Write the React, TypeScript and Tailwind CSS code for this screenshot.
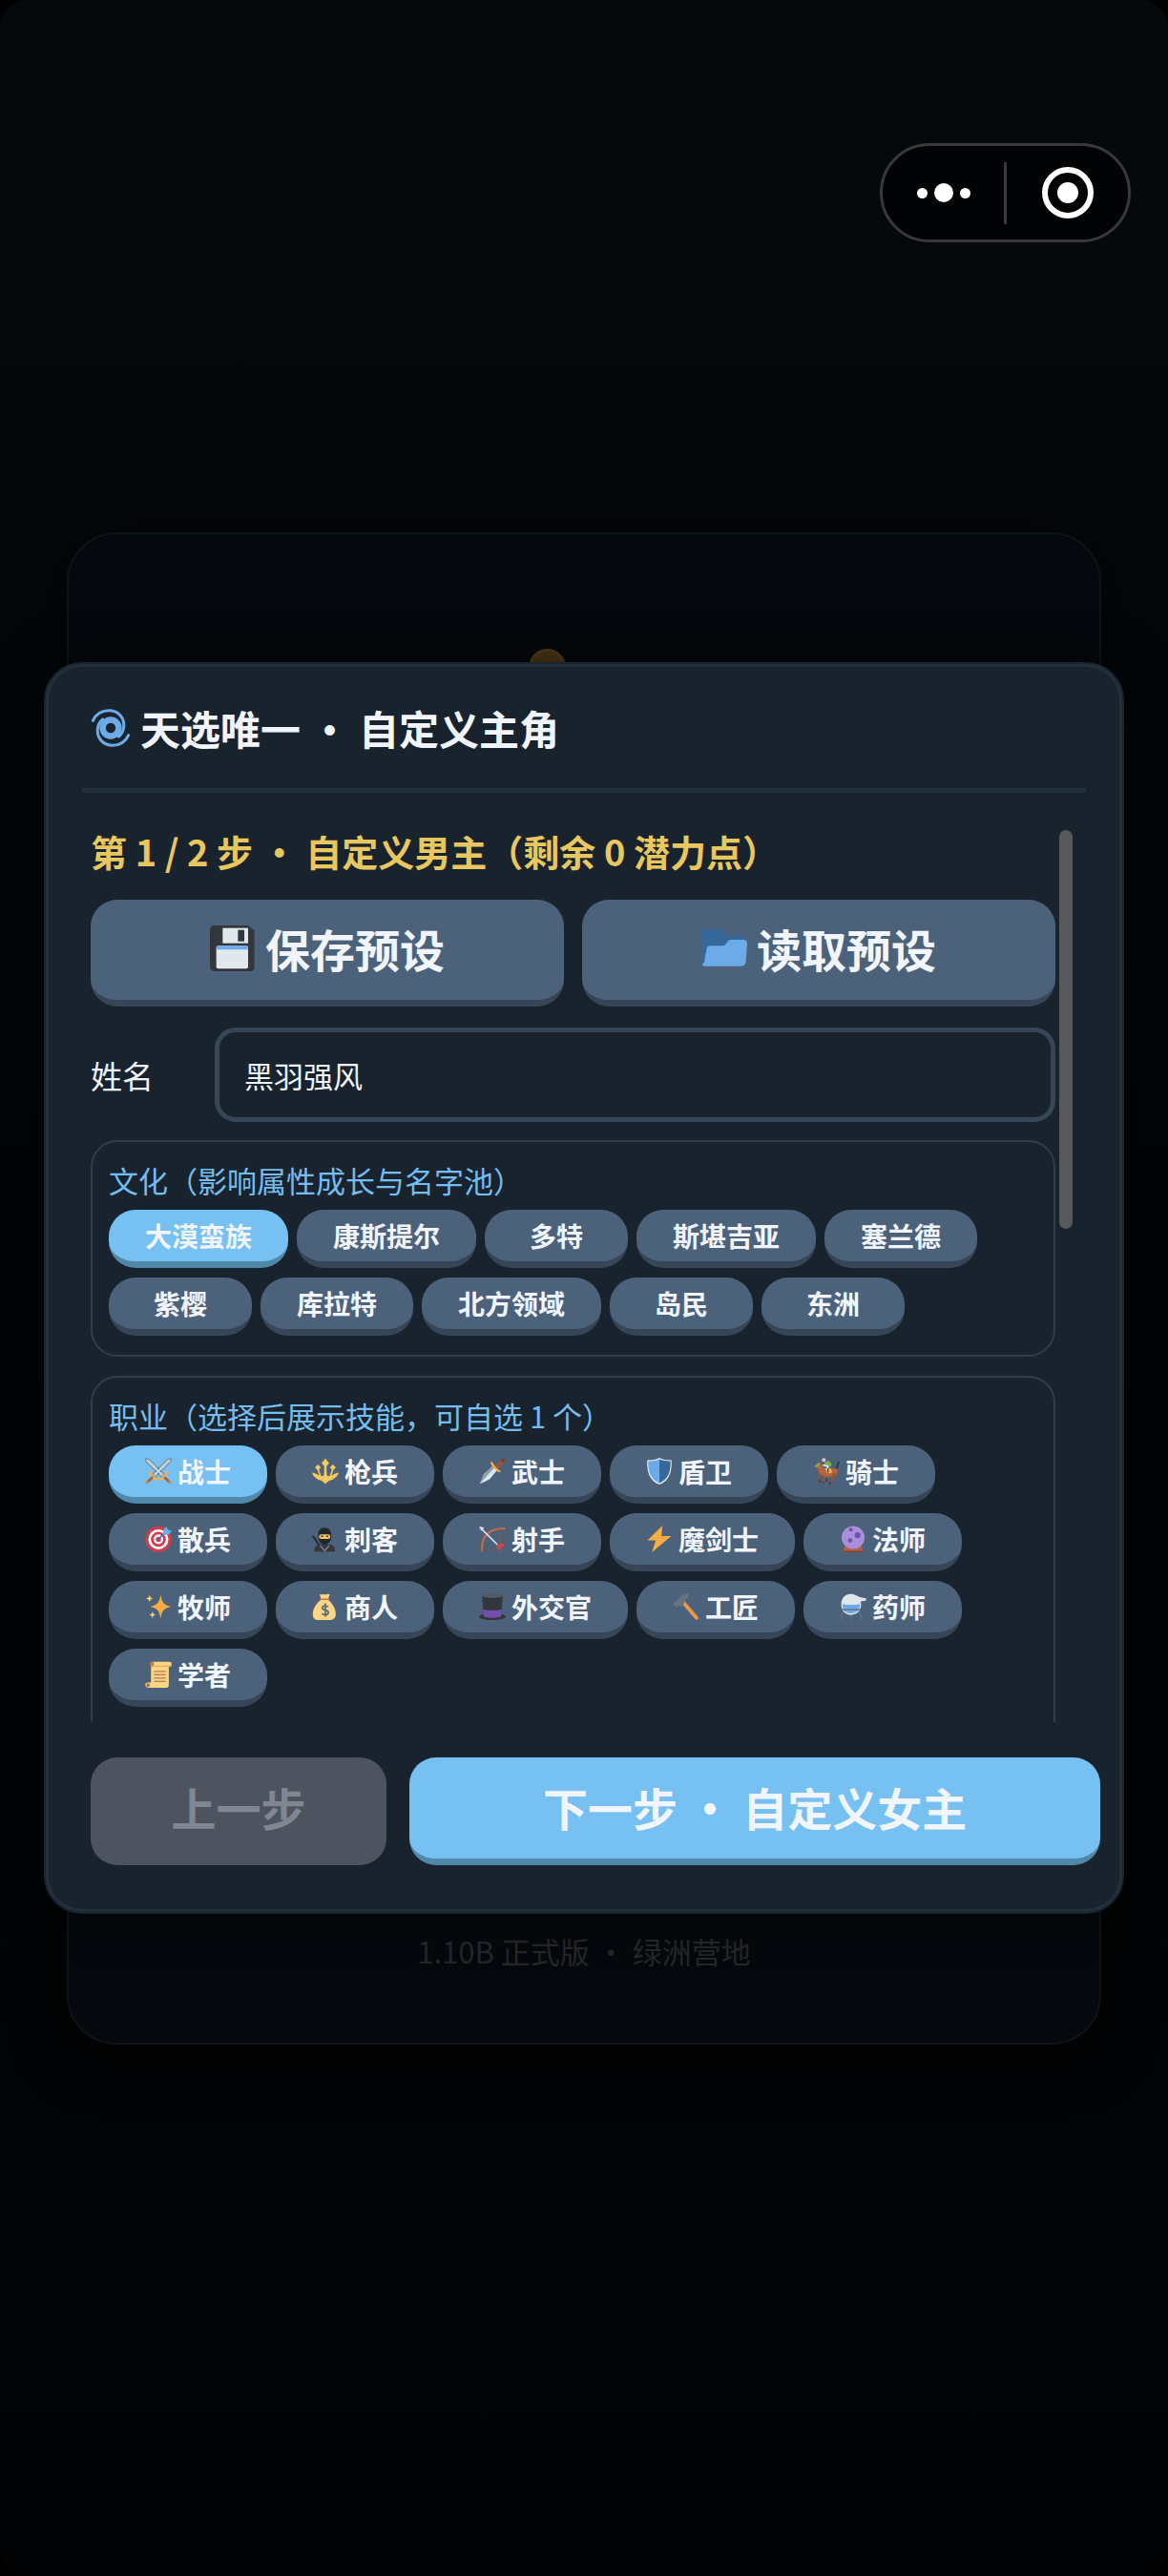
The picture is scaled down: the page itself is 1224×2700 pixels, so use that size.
import { useState, type ReactNode } from "react";

const icons: Record<string, ReactNode> = {
  cyclone: (
    <g fill="none" stroke="#6cabe8" strokeLinecap="round">
      <circle cx="18" cy="18" r="7.2" strokeWidth="5.600" />
      <path d="M2 11.500C5 5 10.500 2.400 16.500 2.400c8 0 13.500 6 13.300 13.400-.1 4.500-1.800 7.800-4.600 10" strokeWidth="2.600" />
      <path d="M34 24.500c-3 6.500-8.500 9.100-14.500 9.100-8 0-13.500-6-13.300-13.400.1-4.500 1.800-7.800 4.600-10" strokeWidth="2.600" />
    </g>
  ),
  floppy: (
    <g>
      <path d="M3 0h27l5 4v28c0 2-1 4-3 4H4c-2 0-4-1-4-4V4c0-2 1-4 3-4z" fill="#31373d" />
      <path d="M10 2h20v12H10z" fill="#e1e8ec" />
      <path d="M22 3.500h5v9h-5z" fill="#31373d" />
      <rect x="5" y="16" width="25" height="18" rx="1.500" fill="#e1e8ec" />
      <path d="M6.500 16h22c1 0 1.500 1 1.500 3H5c0-2 .5-3 1.500-3z" fill="#6cabe8" />
    </g>
  ),
  folder: (
    <g>
      <path d="M0 30V6c0-2 1-3 3-3h10c1.500 0 2.500 1 3.500 2.500S18 8 20 8h11c3 0 4 2 4 5L26 30z" fill="#36689c" />
      <path d="M.5 30c2 0 2-2 2.200-4L4 19c.3-2 1-3 3-3h10c2 0 2-1.500 3.500-3.200 1-1 2-1.500 3.500-1.500h9c2 0 3 1 3 3L35 28c0 3-1.500 4-4 4H3c-1.500 0-2.500-1-2.500-2z" fill="#6cabe8" />
    </g>
  ),
  swords: (
    <g strokeLinecap="round">
      <path d="M1 1l5 1 20 20-4 4L2 6zM35 1l-5 1-20 20 4 4L34 6z" fill="#a9b8c4" stroke="#5f7383" strokeWidth="1" />
      <path d="M3 3l20 20M33 3L13 23" stroke="#d9e3ea" strokeWidth="1.500" />
      <path d="M7 19c0 4 1 5 3.500 6.500C12 28 14 29 17 29M29 19c0 4-1 5-3.500 6.500C24 28 22 29 19 29" stroke="#f2b04f" strokeWidth="3" fill="none" />
      <path d="M9 27l-5 5M27 27l5 5" stroke="#a9603f" strokeWidth="3.500" />
      <circle cx="2.800" cy="33.200" r="2.300" fill="#d08a45" />
      <circle cx="33.200" cy="33.200" r="2.300" fill="#d08a45" />
    </g>
  ),
  trident: (
    <g fill="#f5c95c">
      <path d="M18 1l5 6-3.500 4.500L20 25h-4l.5-13.500L13 7z" />
      <path d="M8 9l4 4-2.700 3.200L12.500 25l-2 1-3-9L4 13zM28 9l-4 4 2.700 3.200L23.500 25l2 1 3-9L32 13z" />
      <path d="M0 20c4 0 8 4 12 4.500 3 .3 4-1.500 6-1.500s3 1.800 6 1.500c4-.5 8-4.500 12-4.500-2 6-7 9.500-13 11l-5 4-5-4C7 29.500 2 26 0 20z" />
    </g>
  ),
  dagger: (
    <g strokeLinecap="round">
      <path d="M1 35l5-13L18 11l6 6-10 12z" fill="#8fa1af" />
      <path d="M1 35L20 14l4 3-10 12z" fill="#dfe7ec" />
      <path d="M25 12l6-7" stroke="#a0523a" strokeWidth="5" />
      <path d="M17 7c1 3 2.500 4 4.500 6.500 2 2 3.500 3.500 6 4.500" stroke="#f2b04f" strokeWidth="3" fill="none" />
      <circle cx="32.500" cy="3.500" r="2.600" fill="#7b3d2e" />
    </g>
  ),
  shield: (
    <g>
      <path d="M18 0c5 2.500 10 3 15 3 1.500 0 1.500 1 1.500 3 0 15-4 25-16.500 30C5.500 31 1.500 21 1.500 6c0-2 0-3 1.500-3 5 0 10-.5 15-3z" fill="#e1e8ec" />
      <path d="M18 2C13 4 9 4.500 3 4.500 2.500 19 6.500 29 18 34z" fill="#6cabe8" />
      <path d="M18 2c5 2 9 2.500 15 2.500C33.500 19 29.500 29 18 34z" fill="#36689c" />
    </g>
  ),
  horse: (
    <g strokeLinecap="round">
      <path d="M31 14c3 0 1-6 4-8" stroke="#31373d" strokeWidth="2.200" fill="none" />
      <path d="M2 13l5-7 4 1 2 6c6 3 12 2 18 1 3 2 3 6 0 9l-5 3-12-1-6-5-2-8-3 2z" fill="#b8643c" />
      <path d="M10 22l-3 5 2 3M14 24l3 4-3 5M26 24l3 4-5 5M29 21l-4 6" stroke="#9b5132" strokeWidth="2.300" fill="none" />
      <path d="M9 30v2M14 33h-1M18 29v3M23 33v2" stroke="#31373d" strokeWidth="1.800" />
      <path d="M2 12l4-5 3 1-2 5z" fill="#79ad4f" />
      <path d="M16 14h8l2 6-7 1z" fill="#f2b04f" />
      <path d="M15 6l6-2 4 4-1 4-7 1z" fill="#79ad4f" />
      <path d="M14 10l6 1M20 12l-1 6" stroke="#e1e8ec" strokeWidth="2.200" />
      <circle cx="14.500" cy="2.800" r="2.600" fill="#f0b8d8" />
      <path d="M20 15v4" stroke="#31373d" strokeWidth="2" />
    </g>
  ),
  target: (
    <g>
      <circle cx="18" cy="18.500" r="17.500" fill="#d23c4c" />
      <circle cx="18" cy="18.500" r="13.500" fill="#fff" />
      <circle cx="18" cy="18.500" r="10" fill="#d23c4c" />
      <circle cx="18" cy="18.500" r="6.500" fill="#fff" />
      <circle cx="18" cy="18.500" r="3.500" fill="#d23c4c" />
      <path d="M18 18.500L27 9" stroke="#3d77b8" strokeWidth="2" />
      <path d="M24 11l1-6 4-4 1.500 4.500L36 7l-4 5-6 1z" fill="#6cabe8" />
    </g>
  ),
  ninja: (
    <g>
      <path d="M1 14l9 13" stroke="#23282d" strokeWidth="2.500" />
      <path d="M3 35c0-7 3-9 8-9.500h12c5 .5 8 2.500 8 9.500z" fill="#31373d" />
      <path d="M17 3c6 0 9 4 9 10 0 8-4 13-9 13s-9-5-9-13C8 7 11 3 17 3z" fill="#23282d" />
      <rect x="9.500" y="12" width="15" height="6" rx="2.500" fill="#f5c95c" />
      <path d="M12 14.500h3M19 14.500h3" stroke="#4b3b21" strokeWidth="1.800" />
      <path d="M11 27l6 7 6-7" stroke="#7d8791" strokeWidth="1.600" fill="none" />
    </g>
  ),
  bow: (
    <g fill="none" strokeLinecap="round">
      <path d="M4 34C3 15 12 4 34 4" stroke="#bd6a4d" strokeWidth="3" />
      <path d="M5 32h24V5" stroke="#7b5a55" strokeWidth="1" />
      <path d="M4 5l24 24" stroke="#dce4ea" strokeWidth="2" />
      <path d="M0 1l7 2-4 4z" fill="#dce4ea" />
      <path d="M24 25l8-1 3 4-5 1-1 5-4-3z" fill="#d9434f" />
    </g>
  ),
  bolt: <path d="M22 0L2 20h11L8 36 34 14H21z" fill="#f7ad43" />,
  crystal: (
    <g>
      <path d="M7 27h22l3 9H4z" fill="#b55f48" />
      <path d="M5 34h26v2H5z" fill="#8a4231" />
      <circle cx="18" cy="16" r="15.500" fill="#a98fd9" />
      <circle cx="15" cy="5.500" r="2.500" fill="#744eaa" />
      <circle cx="24" cy="13" r="4" fill="#744eaa" />
      <circle cx="14" cy="20" r="3" fill="#744eaa" />
    </g>
  ),
  sparkles: (
    <g>
      <path d="M21 2c2 11 4 13.500 14 16-10 2.500-12 5-14 16-2-11-4-13.500-14-16 10-2.500 12-5 14-16z" fill="#f7ad43" />
      <path d="M6 2c.8 3.500 1.500 4.200 5 5-3.500.8-4.200 1.500-5 5-.8-3.500-1.500-4.200-5-5 3.500-.8 4.200-1.500 5-5zM10 24c.8 3.500 1.500 4.200 5 5-3.500.8-4.200 1.500-5 5-.8-3.500-1.500-4.200-5-5 3.500-.8 4.200-1.500 5-5z" fill="#f9cf72" />
    </g>
  ),
  money: (
    <g>
      <path d="M10 1c3 2 5-1 8 1 3-2 4 0 6-1-1 3-2 5-2 8 5 4 10 12 10 19 0 6-4 8-8 8H8c-4 0-7-2-7-8C1 21 6 13 12 9c0-3-1-5-2-8z" fill="#f9d686" />
      <path d="M11 8h12" stroke="#c8764c" strokeWidth="2" />
      <path d="M21.500 18.500c-1-2-7.500-3-7.500 1 0 4.500 8 2 8 6.500 0 4-7.500 3.500-8.500 1M18 13.500v18" stroke="#5c6b78" strokeWidth="2.300" fill="none" />
    </g>
  ),
  hat: (
    <g>
      <ellipse cx="18" cy="31.500" rx="18" ry="4.500" fill="#31373d" />
      <path d="M4 3h28l-2 28c-3 3-21 3-24 0z" fill="#31373d" />
      <path d="M5.200 21.500c7 2 18 2 25.600 0L30 31c-4 3-20 3-24 0z" fill="#744eaa" />
      <ellipse cx="18" cy="3.500" rx="14" ry="3" fill="#4f5a64" />
    </g>
  ),
  hammer: (
    <g strokeLinecap="round">
      <path d="M14 12l18 21" stroke="#ee9547" strokeWidth="5" />
      <path d="M21 1c-5-1-9 1-12 5L0 14l5 5c2-3 4-3 6-1l5-5c-1-3 0-5 5-7z" fill="#66757f" />
    </g>
  ),
  alembic: (
    <g>
      <path d="M4 24L1 35M26 24l4 11M15 28v7" stroke="#66757f" strokeWidth="1.600" />
      <path d="M15 1c6 0 8 3 12 4l9 2-1 3-7 1c1 3 1 6 0 9-2 6-7 9-13 9-8 0-13-6-13-14C2 7 7 1 15 1z" fill="#dfe7ec" />
      <path d="M4 14c5 2 17 2 23 0 1 7-3 13-12 13S3 21 4 14z" fill="#6cabe8" />
      <path d="M3 22h25" stroke="#66757f" strokeWidth="2" />
    </g>
  ),
  scroll: (
    <g>
      <path d="M9 1h24c4 1 4 6 0 7h-1v24c0 2-1 4-3 4H4c-5-1-5-7 0-7h4V8z" fill="#f9d686" />
      <path d="M9 1c4 0 4 6 0 6s-4-6 0-6z" fill="#b97845" />
      <path d="M9 7h24c3-1 3-3 2-5" stroke="#e5ac5a" strokeWidth="1.500" fill="none" />
      <path d="M12 14h16M12 18.500h16M12 23h16M12 27.500h16" stroke="#c07a4f" strokeWidth="1.800" />
      <circle cx="4" cy="32.500" r="2.500" fill="#b97845" />
    </g>
  ),
};

function Emoji({ name, className }: { name: string; className: string }) {
  return (
    <svg viewBox="0 0 36 36" aria-hidden="true" className={`shrink-0 ${className}`}>
      {icons[name]}
    </svg>
  );
}

const cultures = [
  { label: "大漠蛮族" },
  { label: "康斯提尔" },
  { label: "多特" },
  { label: "斯堪吉亚" },
  { label: "塞兰德" },
  { label: "紫樱" },
  { label: "库拉特" },
  { label: "北方领域" },
  { label: "岛民" },
  { label: "东洲" },
];

const jobs = [
  { label: "战士", icon: "swords" },
  { label: "枪兵", icon: "trident" },
  { label: "武士", icon: "dagger" },
  { label: "盾卫", icon: "shield" },
  { label: "骑士", icon: "horse" },
  { label: "散兵", icon: "target" },
  { label: "刺客", icon: "ninja" },
  { label: "射手", icon: "bow" },
  { label: "魔剑士", icon: "bolt" },
  { label: "法师", icon: "crystal" },
  { label: "牧师", icon: "sparkles" },
  { label: "商人", icon: "money" },
  { label: "外交官", icon: "hat" },
  { label: "工匠", icon: "hammer" },
  { label: "药师", icon: "alembic" },
  { label: "学者", icon: "scroll" },
];

type ChipGroupProps = {
  title: string;
  options: { label: string; icon?: string }[];
  value: string;
  onChange: (label: string) => void;
  className: string;
};

function ChipGroup({ title, options, value, onChange, className }: ChipGroupProps) {
  return (
    <section aria-label={title} className={`rounded-[28px] border-2 border-[#303e4b] px-[17px] pt-[17px] ${className}`}>
      <h3 className="text-[31px] leading-[46px] text-[#74bdee]">{title}</h3>
      <div className="mt-2 flex flex-wrap gap-x-[9px] gap-y-[10px]">
        {options.map((option) => (
          <button
            key={option.label}
            type="button"
            aria-pressed={option.label === value}
            onClick={() => onChange(option.label)}
            className={`flex h-[61px] min-w-[150px] items-center justify-center gap-[6px] rounded-[28px] border-b-[7px] px-[38px] text-[28px] leading-[40px] font-bold text-[#f1f5fd] ${
              option.label === value ? "border-[#5088aa] bg-[#76c1f2]" : "border-[#374558] bg-[#4c627b]"
            }`}
          >
            {option.icon && <Emoji name={option.icon} className="size-7" />}
            {option.label}
          </button>
        ))}
      </div>
    </section>
  );
}

function PresetButton({ icon, label }: { icon: string; label: string }) {
  return (
    <button
      type="button"
      className="flex h-[112px] items-center justify-center gap-[10px] rounded-[28px] border-b-[7px] border-[#374558] bg-[#4c627b] pb-[3px] text-[47px] leading-[64px] font-bold text-[#f1f5fd]"
    >
      <Emoji name={icon} className="size-12" />
      {label}
    </button>
  );
}

function Capsule() {
  return (
    <div className="absolute top-[150px] right-[39px] flex h-[104px] w-[263px] items-center rounded-full border-3 border-[#39393b] bg-[#020304]">
      <button type="button" aria-label="更多" className="flex flex-1 items-center justify-center gap-[7px]">
        <span className="size-[11px] rounded-full bg-white" />
        <span className="size-5 rounded-full bg-white" />
        <span className="size-[11px] rounded-full bg-white" />
      </button>
      <span className="h-[65px] w-[3px] bg-[#39393b]" />
      <button type="button" aria-label="关闭" className="flex flex-1 items-center justify-center">
        <span className="flex size-[54px] items-center justify-center rounded-full border-[6px] border-white">
          <span className="size-[22px] rounded-full bg-white" />
        </span>
      </button>
    </div>
  );
}

export default function App() {
  const [name, setName] = useState("黑羽强风");
  const [culture, setCulture] = useState("大漠蛮族");
  const [job, setJob] = useState("战士");

  return (
    <div lang="zh-CN" className="bg-black font-['Noto_Sans_CJK_SC',sans-serif]">
      <div className="relative grid min-h-screen items-center rounded-[28px] bg-linear-to-b from-[#05090c] via-[#030607] to-[#020304]">
        {/* Start screen, dimmed behind the dialog */}
        <div className="relative col-start-1 row-start-1 mx-[70px] flex min-h-[1585px] flex-col justify-end rounded-[52px] border-2 border-[#0c1519] bg-[#05080c] pb-[72px] shadow-[0_10px_60px_rgba(0,0,0,0.6)]">
          <span className="absolute top-[120px] left-[482px] size-[39px] rounded-full border-3 border-[#4f3c1c] bg-[#493315]" />
          <p className="text-center text-[31px] leading-[48px] text-[#252629]">1.10B 正式版 ・ 绿洲营地</p>
        </div>

        {/* Character dialog */}
        <main className="z-10 col-start-1 row-start-1 mx-[46px] rounded-[40px] border-2 border-[#1a262f] bg-[#18232e] shadow-[0_0_50px_rgba(0,0,0,0.5)]">
          <div className="rounded-[38px] border-3 border-[#22303c] pt-[35px] pb-[46px]">
            <header className="mx-[35px] border-b-[5px] border-[#22303c] px-[9px] pb-[34px]">
              <h1 className="flex items-center gap-[10px] text-[42px] leading-[58px] font-bold text-[#f1f5fd]">
                <Emoji name="cyclone" className="size-[42px]" />
                天选唯一 ・ 自定义主角
              </h1>
            </header>

            <div className="relative mt-[33px] mr-[49px] ml-11">
              <div className="max-h-[941px] overflow-y-auto pr-[18px] [scrollbar-width:none]">
                <h2 className="text-[38px] leading-[56px] font-bold text-[#e9c75f]">
                  第 1 / 2 步 ・ 自定义男主（剩余 0 潜力点）
                </h2>

                <div className="mt-[23px] grid grid-cols-2 gap-[19px]">
                  <PresetButton icon="floppy" label="保存预设" />
                  <PresetButton icon="folder" label="读取预设" />
                </div>

                <div className="mt-[22px] mb-[19px] flex items-center">
                  <label htmlFor="name" className="w-[130px] shrink-0 text-[33px] leading-[48px] text-[#f1f5fd]">
                    姓名
                  </label>
                  <input
                    id="name"
                    value={name}
                    onChange={(e) => setName(e.target.value)}
                    className="h-[99px] min-w-0 flex-1 rounded-[22px] border-[5px] border-[#364656] bg-transparent px-[26px] text-[31px] text-[#f1f5fd] outline-none"
                  />
                </div>

                <div className="flex flex-col gap-5">
                  <ChipGroup
                    title="文化（影响属性成长与名字池）"
                    options={cultures}
                    value={culture}
                    onChange={setCulture}
                    className="pb-5"
                  />
                  <ChipGroup
                    title="职业（选择后展示技能，可自选 1 个）"
                    options={jobs}
                    value={job}
                    onChange={setJob}
                    className="pb-24"
                  />
                </div>
              </div>
              {/* Scroll thumb */}
              <span className="absolute top-[6px] right-0 h-[418px] w-[14px] rounded-full bg-[#56585c]" />
            </div>

            <footer className="mt-[37px] mr-5 ml-11 grid grid-cols-[3fr_7fr] gap-6">
              <button type="button" disabled className="h-[113px] rounded-[28px] bg-[#4d545f] pb-[10px] text-[47px] leading-[64px] font-bold text-[#808793]">
                上一步
              </button>
              <button type="button" className="h-[113px] rounded-[28px] border-b-[7px] border-[#5088aa] bg-[#76c1f2] pb-[3px] text-[47px] leading-[64px] font-bold text-[#f1f5fd]">
                下一步 ・ 自定义女主
              </button>
            </footer>
          </div>
        </main>

        <Capsule />
      </div>
    </div>
  );
}
